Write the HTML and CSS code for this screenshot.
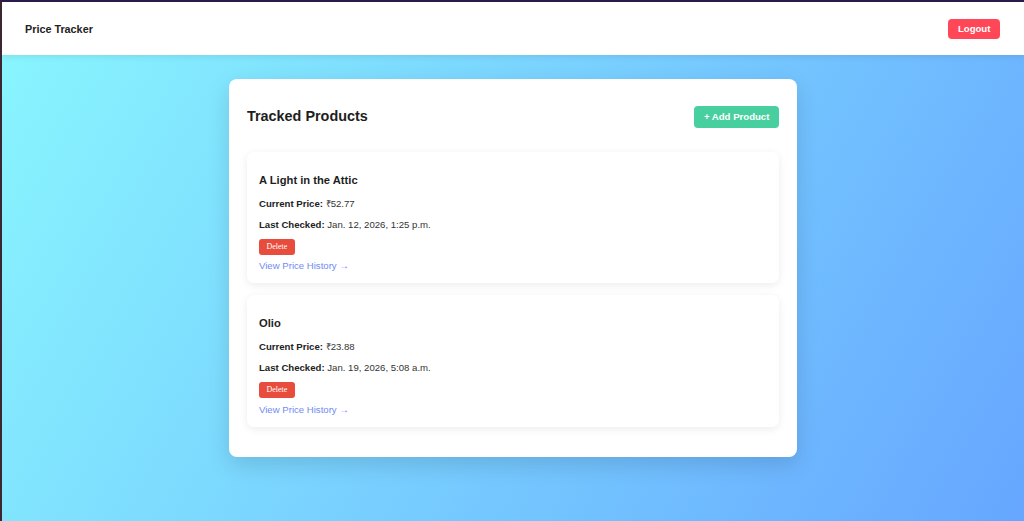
FILE: index.html
```html
<!DOCTYPE html>
<html lang="en">
<head>
<meta charset="utf-8">
<title>Price Tracker</title>
<link rel="stylesheet" href="styles.css">
</head>
<body>
  <header class="topbar">
    <div class="brand">Price Tracker</div>
    <button class="btn-logout">Logout</button>
  </header>
  <main class="page">
    <section class="panel">
      <div class="panel-head">
        <h2 class="panel-title">Tracked Products</h2>
        <button class="btn-add">+ Add Product</button>
      </div>
      <article class="product">
        <h3 class="product-name">A Light in the Attic</h3>
        <p class="meta"><strong>Current Price:</strong> ₹52.77</p>
        <p class="meta"><strong>Last Checked:</strong> Jan. 12, 2026, 1:25 p.m.</p>
        <div class="actions"><button class="btn-delete">Delete</button></div>
        <a class="history" href="#">View Price History →</a>
      </article>
      <article class="product">
        <h3 class="product-name">Olio</h3>
        <p class="meta"><strong>Current Price:</strong> ₹23.88</p>
        <p class="meta"><strong>Last Checked:</strong> Jan. 19, 2026, 5:08 a.m.</p>
        <div class="actions"><button class="btn-delete">Delete</button></div>
        <a class="history" href="#">View Price History →</a>
      </article>
    </section>
  </main>
</body>
</html>
```

FILE: styles.css
```css
* { box-sizing: border-box; }

html, body { height: 100%; }

body {
  margin: 0;
  min-height: 100vh;
  border-top: 2px solid #2c1a4c;
  border-left: 2px solid #3b2632;
  font-family: "Liberation Sans", Arial, sans-serif;
  color: #333;
  background: linear-gradient(120deg, #89f7fe 0%, #66a6ff 100%);
  background-attachment: fixed;
}

.topbar {
  height: 53px;
  background: #fff;
  display: flex;
  align-items: center;
  justify-content: space-between;
  padding: 0 24px 0 23px;
  box-shadow: 0 2px 6px rgba(0, 0, 0, 0.08);
  position: relative;
}

.brand {
  font-size: 10.8px;
  font-weight: bold;
  color: #222;
}

.btn-logout {
  font-family: "Liberation Sans", Arial, sans-serif;
  font-size: 9.6px;
  font-weight: bold;
  line-height: 11px;
  color: #fff;
  background: #ff4757;
  border: none;
  border-radius: 4px;
  padding: 4.5px 9.6px;
}

.page {
  display: flex;
  justify-content: center;
  padding-top: 24px;
}

.panel {
  width: 568px;
  background: #fff;
  border-radius: 8px;
  padding: 18px;
  box-shadow: 0 8px 22px rgba(0, 0, 0, 0.13);
}

.panel-head {
  display: flex;
  align-items: center;
  justify-content: space-between;
  margin-bottom: 15.5px;
}

.panel-title {
  font-size: 14.4px;
  line-height: 16.5px;
  font-weight: bold;
  color: #1e1e1e;
  margin: 11px 0 12px;
}

.btn-add {
  font-family: "Liberation Sans", Arial, sans-serif;
  font-size: 9.6px;
  font-weight: bold;
  line-height: 11px;
  color: #fff;
  background: #48cfa0;
  border: none;
  border-radius: 4px;
  padding: 5.5px 9.6px;
}

.product {
  background: #fff;
  border-radius: 7px;
  padding: 12px;
  margin-bottom: 12px;
  box-shadow: 0 2px 8px rgba(0, 0, 0, 0.08);
}

.product-name {
  font-size: 11.2px;
  line-height: 13px;
  font-weight: bold;
  color: #1e1e1e;
  margin: 10px 0 11px;
}

.meta {
  font-size: 9.6px;
  line-height: 11px;
  margin: 0 0 9.6px;
  color: #333;
}

.meta strong { color: #222; }

.actions { display: flex; }

.btn-delete {
  font-family: "Liberation Serif", "Times New Roman", serif;
  font-size: 8px;
  line-height: 9.5px;
  color: #fff;
  background: #e74c3c;
  border: none;
  border-radius: 3px;
  padding: 3px 7.4px;
}

.history {
  display: block;
  margin-top: 5.6px;
  font-size: 9.6px;
  line-height: 11px;
  color: #6f8cf2;
  text-decoration: none;
}
```
